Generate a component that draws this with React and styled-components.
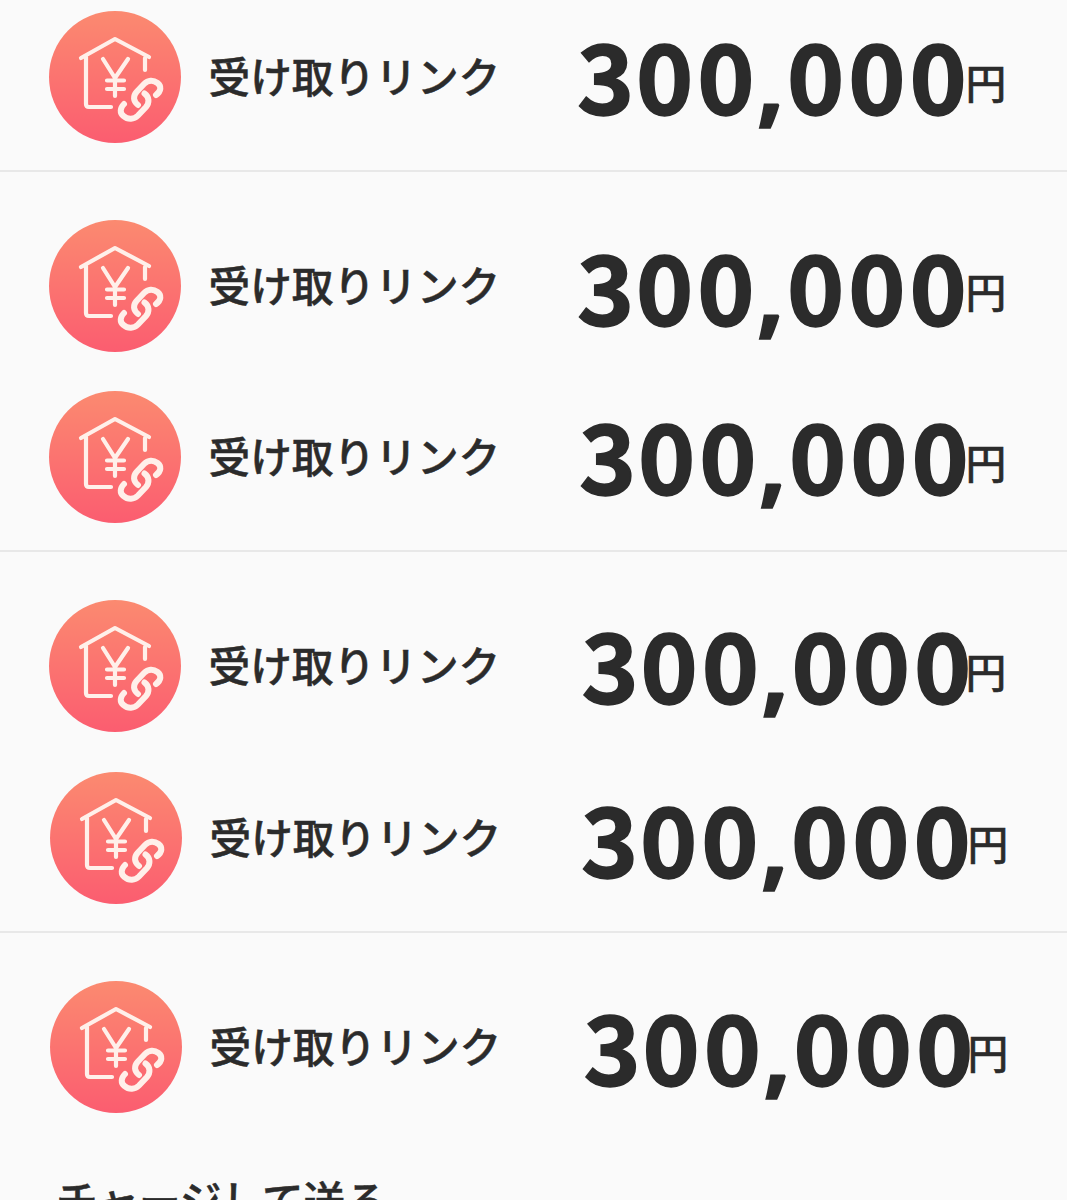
import React from "react";
import styled, { createGlobalStyle } from "styled-components";

const GlobalStyle = createGlobalStyle`
  * {
    box-sizing: border-box;
  }
  body {
    margin: 0;
    background-color: #fafafa;
  }
`;

const Page = styled.main`
  width: 1067px;
  height: 1200px;
  overflow: hidden;
  background-color: #fafafa;
  color: #2b2b2b;
  font-family: "Noto Sans CJK JP", sans-serif;
`;

const Group = styled.section`
  display: flex;
  flex-direction: column;
  height: ${(props) => props.$height}px;
  padding-top: ${(props) => props.$top}px;
  border-bottom: ${(props) => (props.$last ? "none" : "2px solid #e8e8e8")};
`;

const Row = styled.div`
  display: flex;
  align-items: center;
  flex: none;
  height: ${(props) => props.$height || 171}px;
  padding-left: ${(props) => 49 + (props.$shift || 0)}px;
`;

const Icon = styled.svg`
  flex: none;
  width: 132px;
  height: 132px;
`;

const Label = styled.span`
  flex: none;
  width: 371px;
  padding: 0 0 3px 27.5px;
  font-size: 41.7px;
  font-weight: 500;
  line-height: 60px;
  white-space: nowrap;
  -webkit-text-stroke: 0.5px #2b2b2b;
`;

const Price = styled.div`
  display: flex;
  align-items: center;
`;

const Amount = styled.span`
  flex: none;
  width: ${(props) => 413.5 + (props.$shift || 0)}px;
  margin-top: ${(props) => props.$y * 2}px;
  padding-left: ${(props) => props.$x}px;
  font-size: 97px;
  font-weight: 700;
  line-height: 120px;
  letter-spacing: 4px;
  white-space: nowrap;
  -webkit-text-stroke: 1.6px #2b2b2b;
`;

const Lead = styled.span`
  margin-right: -2.3px;
`;

const Comma = styled.span`
  margin: 0 -1.5px 0 -1.6px;
  font-family: "Noto Sans", sans-serif;
  line-height: 1;
`;

const Yen = styled.span`
  padding-top: 10px;
  font-size: 40.8px;
  font-weight: 500;
  line-height: 60px;
  -webkit-text-stroke: 0.4px #2b2b2b;
`;

const Footer = styled.h2`
  margin: 37px 0 0 56px;
  font-size: 41.7px;
  font-weight: 500;
  line-height: 60px;
  -webkit-text-stroke: 0.5px #2b2b2b;
`;

const LinkIcon = () => (
  <Icon viewBox="0 0 132 132" fill="none">
    <defs>
      <linearGradient id="coral" x1="0" y1="0" x2="0" y2="1">
        <stop offset="0" stopColor="#fb8a70" />
        <stop offset="1" stopColor="#fb5d70" />
      </linearGradient>
    </defs>
    <circle cx="66" cy="66" r="66" fill="url(#coral)" />
    <g stroke="#fff0ea" strokeWidth="4.2" strokeLinecap="round" strokeLinejoin="round">
      <path d="M32 47L66 28L100 46" />
      <path d="M37 46V93Q37 96 40 96H62" />
      <path d="M96 47V59" />
      <path d="M54 48L66 67L79 48M66 67V85M58 69.5H75M58 78H75" />
    </g>
    <g stroke="#fff0ea" strokeWidth="6" strokeLinecap="round">
      <path d="M107 84C112.500 80 112.500 75 108.500 72C104 68.500 99 69 95 73L87.500 81C84 85 84 90 89 94" />
      <path d="M75 93C71 97 70.500 102 74.500 105C79 109 85 108.500 89 104.500L97 96C100.500 92 100.500 86 95.500 82.500" />
    </g>
  </Icon>
);

function ReceiveRow({ height, shift, x, y }) {
  return (
    <Row $height={height} $shift={shift}>
      <LinkIcon />
      <Label>受け取りリンク</Label>
      <Price>
        <Amount $x={x} $y={y} $shift={shift}>
          <Lead>3</Lead>00<Comma>,</Comma>000
        </Amount>
        <Yen>円</Yen>
      </Price>
    </Row>
  );
}

export default function App() {
  return (
    <>
      <GlobalStyle />
      <Page>
        <Group $height={172} $top={0}>
          <ReceiveRow height={153} x={25} y={-3.5} />
        </Group>
        <Group $height={380} $top={28}>
          <ReceiveRow x={25} y={-2} />
          <ReceiveRow x={27} y={-4} />
        </Group>
        <Group $height={381} $top={28}>
          <ReceiveRow x={29.5} y={-4} />
          <ReceiveRow height={173} shift={1} x={28} y={-2} />
        </Group>
        <Group $height={267} $top={28} $last>
          <ReceiveRow shift={1} x={30.5} y={-3} />
          <Footer>チャージして送る</Footer>
        </Group>
      </Page>
    </>
  );
}
